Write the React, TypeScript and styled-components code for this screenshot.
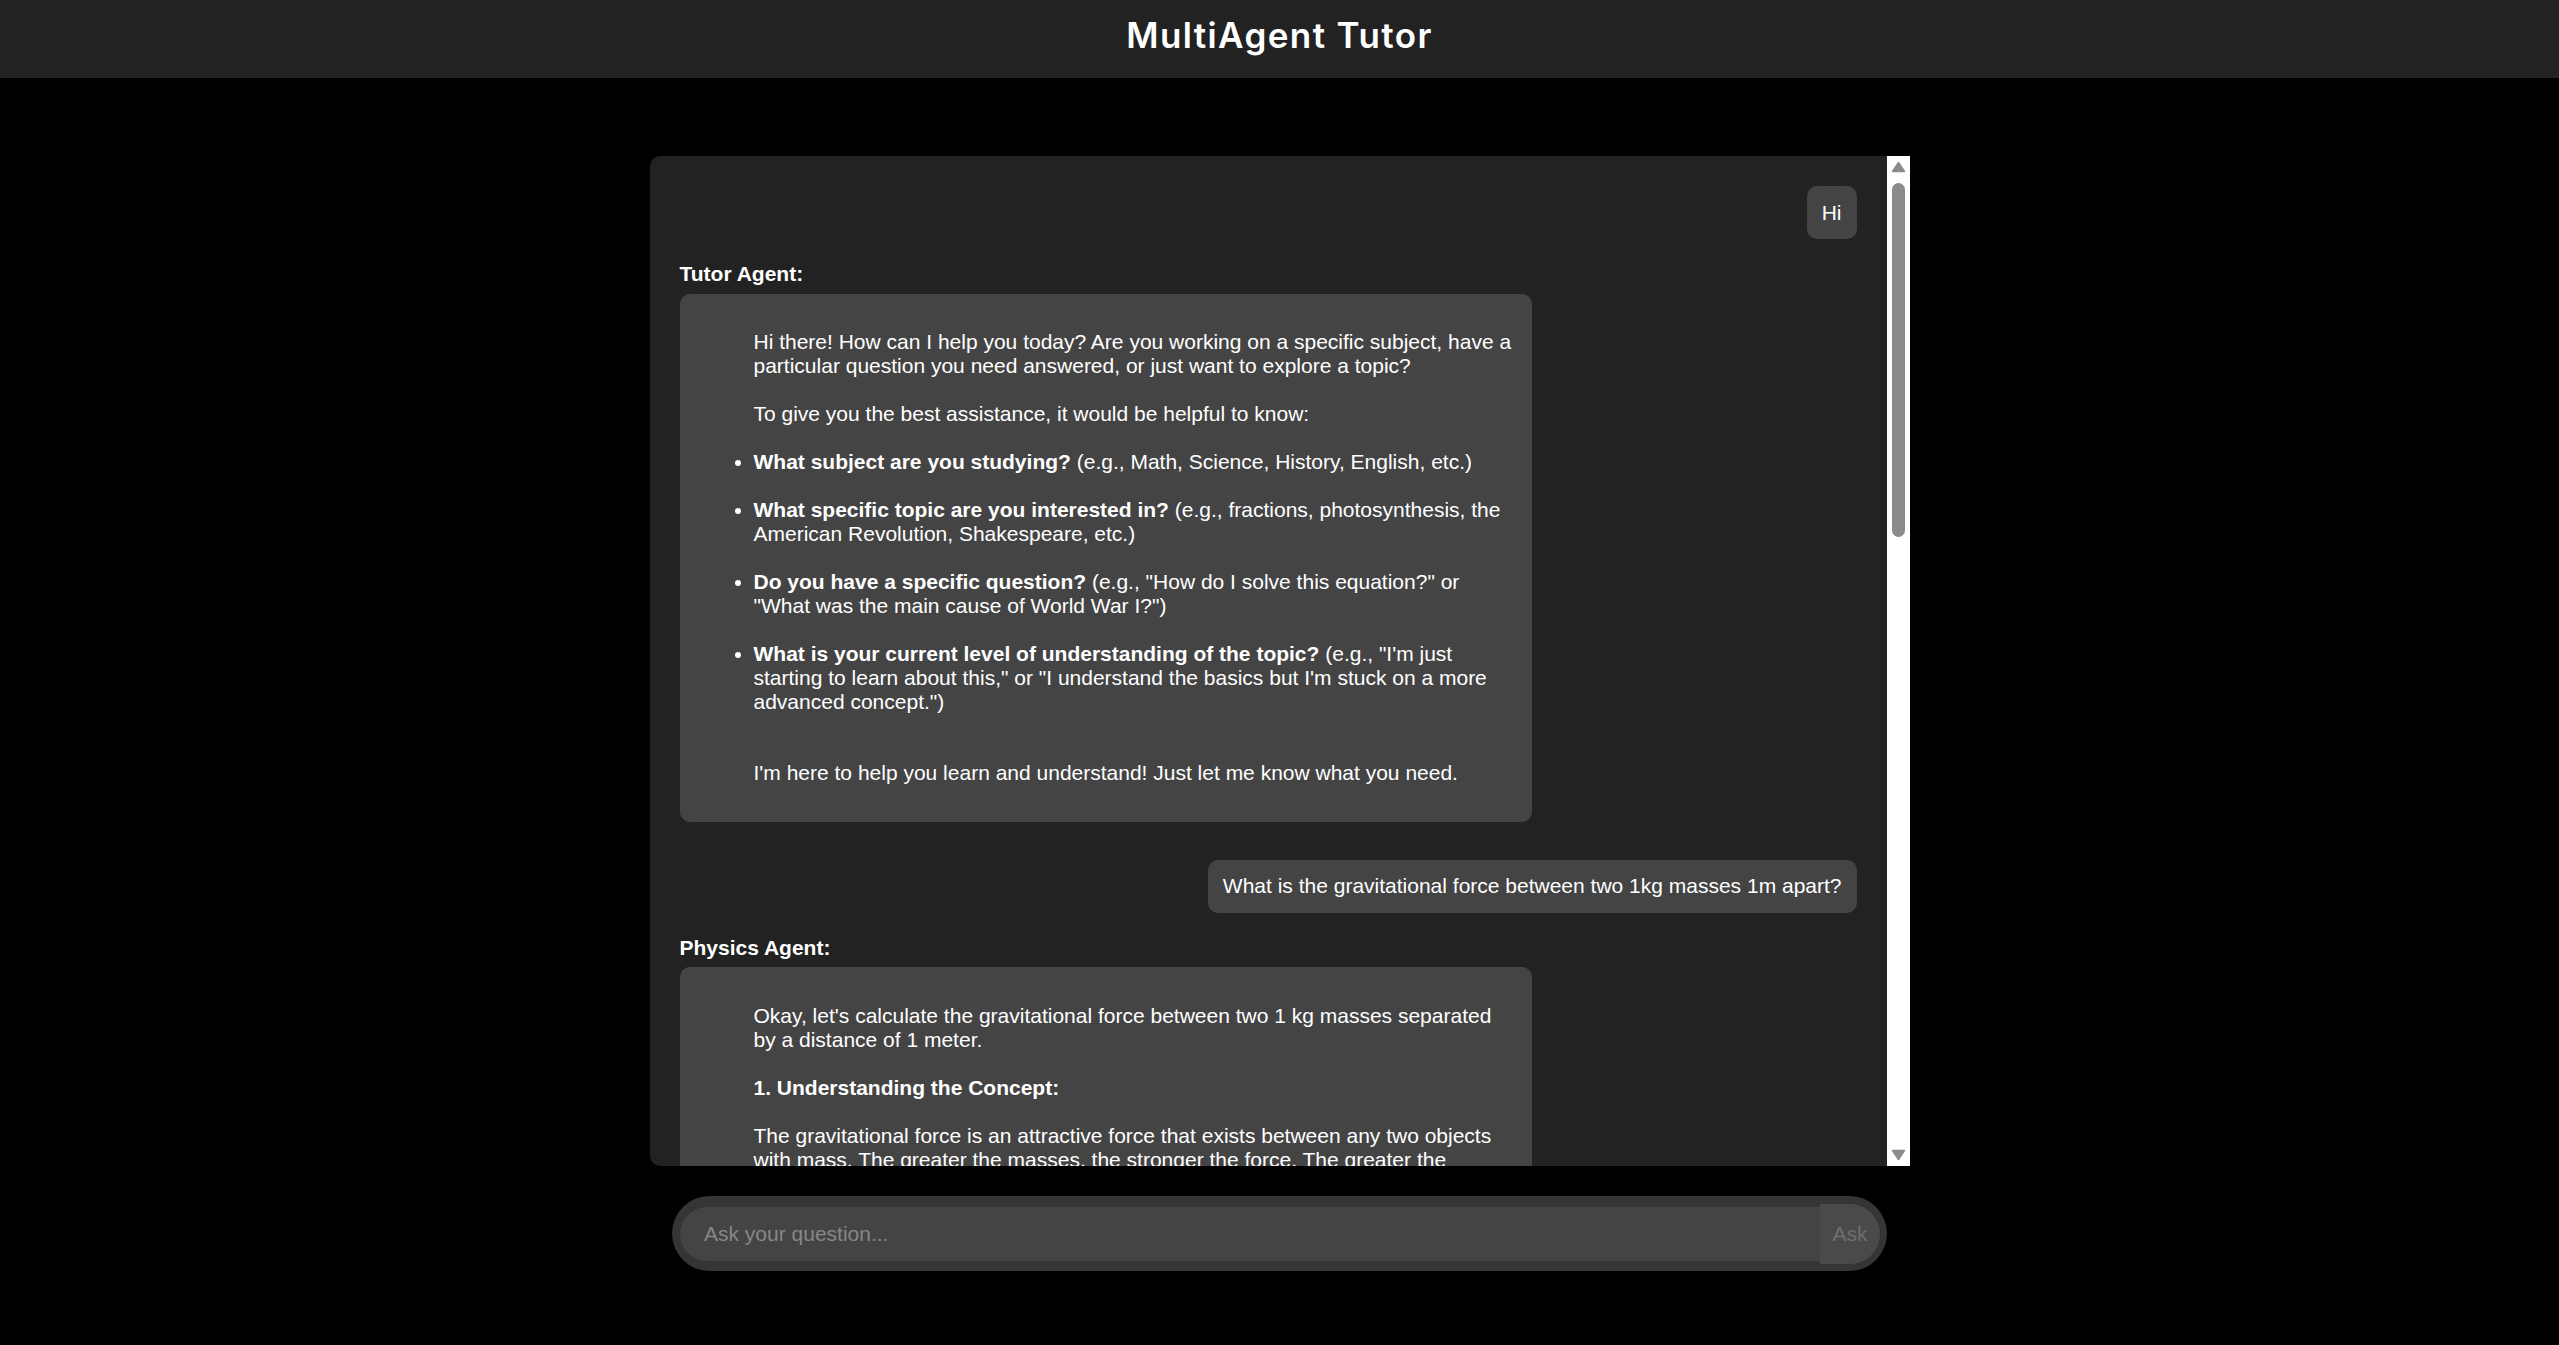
import React from "react";
import styled, { createGlobalStyle } from "styled-components";

const GlobalStyle = createGlobalStyle`
  html, body {
    margin: 0;
    padding: 0;
    background: #000;
  }
  body {
    font-family: "Liberation Sans", Arial, sans-serif;
    color: #fff;
  }
`;

const Header = styled.header`
  box-sizing: border-box;
  height: 78px;
  padding-top: 14px;
  background: #222;
  text-align: center;
`;

const Title = styled.h1`
  margin: 0;
  font-family: Inter, "Open Sans", sans-serif;
  font-size: 35px;
  font-weight: 600;
  letter-spacing: 1.4px;
  line-height: normal;
  color: #fff;
`;

const Main = styled.main`
  display: flex;
  flex-direction: column;
  align-items: center;
  padding-top: 78px;
`;

const ChatPanel = styled.div`
  display: flex;
  width: 1260px;
  height: 1010px;
  background: #222;
  border-radius: 10px 0 0 10px;
  overflow: hidden;
  font-size: 21px;
  line-height: 24px;
`;

const ScrollArea = styled.div`
  flex: 1;
  overflow: hidden;
`;

/* drawn scrollbar: headless chrome hides the native one */
const ScrollTrack = styled.div`
  display: flex;
  flex-direction: column;
  width: 23px;
  background: #fff;
`;

const ArrowButton = styled.div`
  height: 22px;
  display: flex;
  justify-content: center;
  align-items: center;
`;

const ThumbLane = styled.div`
  flex: 1;
  padding: 5px 5px;
`;

const Thumb = styled.div`
  width: 13px;
  height: 354px;
  background: #8b8b8b;
  border-radius: 7px;
`;

const MessageList = styled.div`
  display: flex;
  flex-direction: column;
  padding: 30px;
`;

const UserBubble = styled.div`
  align-self: flex-end;
  padding: 14.5px 15px;
  margin-bottom: 23px;
  background: #444;
  border-radius: 10px;
`;

const AgentBlock = styled.div`
  margin-bottom: 38px;
  &:last-child {
    margin-bottom: 0;
  }
`;

const AgentLabel = styled.div`
  font-weight: bold;
  margin-bottom: 7.5px;
`;

const AgentBubble = styled.div`
  box-sizing: border-box;
  max-width: 852px;
  padding: 12.5px 17px 12.5px 74px;
  background: #444;
  border-radius: 10px;
`;

const Para = styled.p`
  margin: 24px 0;
`;

const List = styled.ul<{ $tail?: boolean }>`
  margin: 24px 0 ${(p) => (p.$tail ? "47px" : "24px")};
  padding: 0;
  list-style: disc outside;
`;

const Item = styled.li<{ $tight?: boolean }>`
  margin: ${(p) => (p.$tight ? "0" : "24px 0")};
`;

const AskForm = styled.form`
  box-sizing: border-box;
  display: flex;
  align-items: center;
  width: 1215px;
  height: 75px;
  margin-top: 30px;
  padding: 0 7px 0 8px;
  background: #353535;
  border-radius: 38px;
`;

const AskInput = styled.input`
  flex: 1;
  box-sizing: border-box;
  height: 54px;
  padding: 0 0 0 24px;
  border: none;
  outline: none;
  background: #444;
  color: #fff;
  caret-color: #fff;
  border-radius: 27px 0 0 27px;
  font: 21px "Liberation Sans", Arial, sans-serif;

  &::placeholder {
    color: #878787;
  }
`;

const AskButton = styled.button`
  width: 60px;
  height: 60px;
  padding: 0;
  border: none;
  background: #4a4a4a;
  color: #6e6e6e;
  border-radius: 0 30px 30px 0;
  font: 21px "Liberation Sans", Arial, sans-serif;
`;

const Arrow: React.FC<{ down?: boolean }> = ({ down }) => (
  <svg width="15" height="12" viewBox="0 0 15 12">
    <polygon
      points={down ? "1.5,1.5 13.5,1.5 7.5,10.5" : "1.5,10.5 13.5,10.5 7.5,1.5"}
      fill="#8b8b8b"
      stroke="#8b8b8b"
      strokeWidth="1.5"
      strokeLinejoin="round"
    />
  </svg>
);

const App: React.FC = () => {
  return (
    <>
      <GlobalStyle />
      <Header>
        <Title>MultiAgent Tutor</Title>
      </Header>
      <Main>
        <ChatPanel>
          <ScrollArea>
            <MessageList>
              <UserBubble>Hi</UserBubble>
              <AgentBlock>
                <AgentLabel>Tutor Agent:</AgentLabel>
                <AgentBubble>
                  <Para>
                    Hi there! How can I help you today? Are you working on a specific subject, have a
                    particular question you need answered, or just want to explore a topic?
                  </Para>
                  <Para>To give you the best assistance, it would be helpful to know:</Para>
                  <List $tail>
                    <Item>
                      <b>What subject are you studying?</b> (e.g., Math, Science, History, English, etc.)
                    </Item>
                    <Item>
                      <b>What specific topic are you interested in?</b> (e.g., fractions, photosynthesis,
                      the American Revolution, Shakespeare, etc.)
                    </Item>
                    <Item>
                      <b>Do you have a specific question?</b> (e.g., "How do I solve this equation?" or
                      "What was the main cause of World War I?")
                    </Item>
                    <Item>
                      <b>What is your current level of understanding of the topic?</b> (e.g., "I'm just
                      starting to learn about this," or "I understand the basics but I'm stuck on a more
                      advanced concept.")
                    </Item>
                  </List>
                  <Para>I'm here to help you learn and understand! Just let me know what you need.</Para>
                </AgentBubble>
              </AgentBlock>
              <UserBubble>What is the gravitational force between two 1kg masses 1m apart?</UserBubble>
              <AgentBlock>
                <AgentLabel>Physics Agent:</AgentLabel>
                <AgentBubble>
                  <Para>
                    Okay, let's calculate the gravitational force between two 1 kg masses separated by a
                    distance of 1 meter.
                  </Para>
                  <Para>
                    <b>1. Understanding the Concept:</b>
                  </Para>
                  <Para>
                    The gravitational force is an attractive force that exists between any two objects
                    with mass. The greater the masses, the stronger the force. The greater the distance
                    between them, the weaker the force. This relationship is described by Newton's Law
                    of Universal Gravitation.
                  </Para>
                  <Para>
                    <b>2. Newton's Law of Universal Gravitation:</b>
                  </Para>
                  <Para>The formula for the gravitational force (F) between two objects is:</Para>
                  <Para>F = G * (m1 * m2) / r²</Para>
                  <Para>Where:</Para>
                  <List>
                    <Item $tight>F is the gravitational force (in Newtons, N)</Item>
                    <Item $tight>
                      G is the gravitational constant (approximately 6.674 × 10⁻¹¹ N⋅m²/kg²)
                    </Item>
                    <Item $tight>m1 is the mass of the first object (in kilograms, kg)</Item>
                    <Item $tight>m2 is the mass of the second object (in kilograms, kg)</Item>
                    <Item $tight>
                      r is the distance between the centers of the two objects (in meters, m)
                    </Item>
                  </List>
                  <Para>
                    <b>3. Applying the Formula:</b>
                  </Para>
                  <Para>In this case:</Para>
                  <List>
                    <Item $tight>m1 = 1 kg</Item>
                    <Item $tight>m2 = 1 kg</Item>
                    <Item $tight>r = 1 m</Item>
                    <Item $tight>G = 6.674 × 10⁻¹¹ N⋅m²/kg²</Item>
                  </List>
                  <Para>
                    <b>4. Calculation:</b>
                  </Para>
                  <Para>F = (6.674 × 10⁻¹¹ N⋅m²/kg²) * (1 kg * 1 kg) / (1 m)²</Para>
                  <Para>F = 6.674 × 10⁻¹¹ N</Para>
                  <Para>
                    <b>5. Answer:</b>
                  </Para>
                  <Para>
                    The gravitational force between two 1 kg masses separated by a distance of 1 meter
                    is approximately <b>6.674 × 10⁻¹¹ Newtons</b>.
                  </Para>
                  <Para>
                    This is an incredibly small force! You wouldn't be able to feel it at all. Gravity
                    only becomes noticeable when at least one of the objects is extremely massive, like
                    the Earth.
                  </Para>
                </AgentBubble>
              </AgentBlock>
            </MessageList>
          </ScrollArea>
          <ScrollTrack>
            <ArrowButton>
              <Arrow />
            </ArrowButton>
            <ThumbLane>
              <Thumb />
            </ThumbLane>
            <ArrowButton>
              <Arrow down />
            </ArrowButton>
          </ScrollTrack>
        </ChatPanel>
        <AskForm onSubmit={(e) => e.preventDefault()}>
          <AskInput placeholder="Ask your question..." autoFocus />
          <AskButton type="submit">Ask</AskButton>
        </AskForm>
      </Main>
    </>
  );
};

export default App;
